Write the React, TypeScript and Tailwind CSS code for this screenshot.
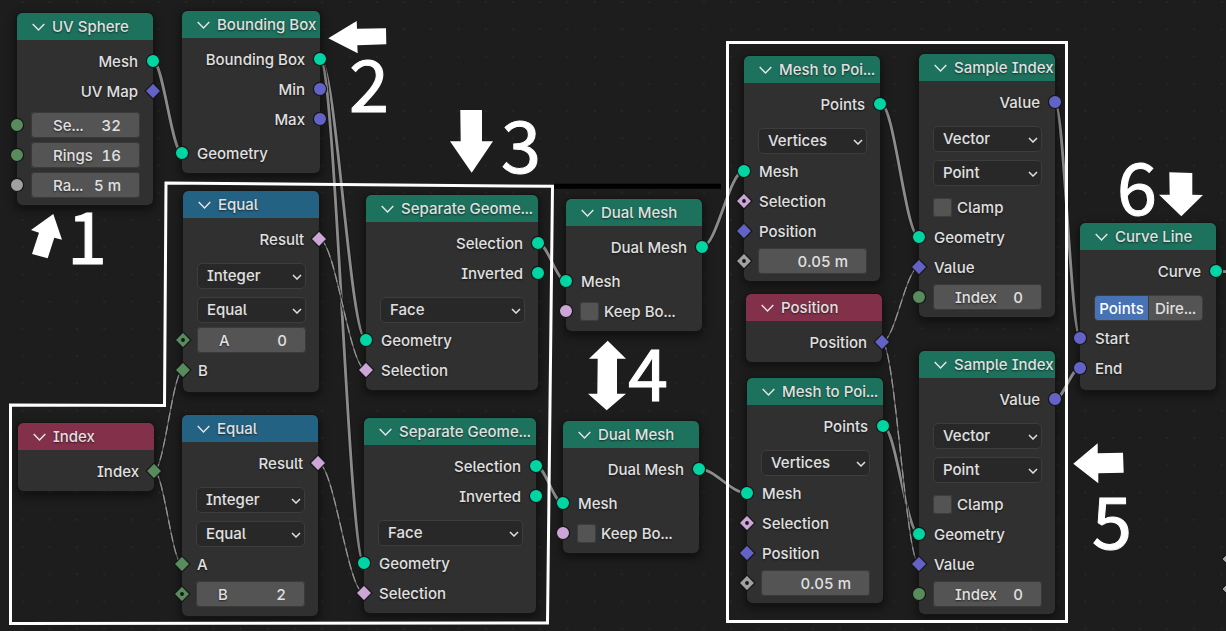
import React, { useId } from "react";
import clsx from "clsx";

type Shape = "circle" | "diamond" | "dotted";
type Tint = "geometry" | "vector" | "boolean" | "integer" | "float";
type SocketSpec = { shape?: Shape; tint: Tint };

const fills: Record<Tint, string> = {
  geometry: "fill-[#00d6a3]",
  vector: "fill-[#6363c7]",
  boolean: "fill-[#cca6d6]",
  integer: "fill-[#598c5c]",
  float: "fill-[#a1a1a1]",
};

function Socket({ shape = "circle", tint, side }: SocketSpec & { side: "left" | "right" }) {
  return (
    <svg
      viewBox="0 0 18 18"
      aria-hidden="true"
      className={clsx("absolute top-1.5 size-[18px]", side === "left" ? "-left-[9px]" : "-right-[9px]", fills[tint])}
    >
      {shape === "circle" ? (
        <circle cx="9" cy="9" r="6.6" stroke="#161616" strokeWidth="1.2" />
      ) : (
        <path d="M9 1.1 16.9 9 9 16.9 1.1 9Z" stroke="#161616" strokeWidth="1.2" />
      )}
      {shape === "dotted" && <circle cx="9" cy="9" r="1.9" fill="#161616" />}
    </svg>
  );
}

function Output({ label, ...socket }: SocketSpec & { label: string }) {
  return (
    <div className="relative flex h-[30px] items-center justify-end px-[15px]">
      {label}
      <Socket {...socket} side="right" />
    </div>
  );
}

function Input({ label, ...socket }: SocketSpec & { label: string }) {
  return (
    <div className="relative flex h-[30px] items-center px-[15px]">
      <Socket {...socket} side="left" />
      {label}
    </div>
  );
}

function NumberField({ label, name, value, ...socket }: SocketSpec & { label?: string; name: string; value: string }) {
  return (
    <div className="relative flex h-[30px] items-center pr-[13px] pl-[14px]">
      <Socket {...socket} side="left" />
      <label className="flex h-[26px] min-w-0 flex-1 items-center rounded bg-[#545454] pr-[19px] pl-[22px] ring-1 ring-[#3a3a3a] ring-inset">
        {label && <span>{label}</span>}
        <input
          type="text"
          aria-label={name}
          defaultValue={value}
          className="w-0 min-w-0 flex-1 bg-transparent text-right outline-none"
        />
      </label>
    </div>
  );
}

function Check({ label, socket }: { label: string; socket?: SocketSpec }) {
  const id = useId();
  return (
    <div className="relative flex h-[30px] items-center gap-[5px] px-[14px]">
      {socket && <Socket {...socket} side="left" />}
      <input id={id} type="checkbox" className="size-[19px] appearance-none rounded-[3px] bg-[#545454] ring-1 ring-[#3d3d3d] ring-inset" />
      <label htmlFor={id}>{label}</label>
    </div>
  );
}

function Options({ children }: { children: React.ReactNode }) {
  return <div className="mt-[9px] mb-0.5 flex flex-col gap-2 pr-[13px] pl-[14px]">{children}</div>;
}

function Dropdown({ name, value }: { name: string; value: string }) {
  return (
    <div className="grid h-[26px] items-center">
      <select
        aria-label={name}
        defaultValue={value}
        className="col-start-1 row-start-1 h-[26px] w-full appearance-none rounded-[5px] border border-[#3d3d3d] bg-[#282828] pl-[9px] leading-[22px] text-[#e0e0e0] outline-none"
      >
        <option>{value}</option>
      </select>
      <svg viewBox="0 0 10 6" aria-hidden="true" className="pointer-events-none col-start-1 row-start-1 mt-0.5 mr-1 h-1.5 w-2.5 justify-self-end">
        <path d="M1 1 5 5 9 1" fill="none" stroke="#e0e0e0" strokeWidth="1.5" />
      </svg>
    </div>
  );
}

function Node({
  title,
  place,
  head = "bg-[#1d725e]",
  foot = "pb-[5px]",
  children,
}: {
  title: string;
  place: string;
  head?: string;
  foot?: string;
  children: React.ReactNode;
}) {
  return (
    <section
      className={clsx(
        "absolute rounded-[5px] bg-[#303030] shadow-[0_3px_8px_2px_rgba(0,0,0,0.45)] outline outline-[#151515]",
        place,
        foot,
      )}
    >
      <header className={clsx("mb-1.5 flex h-[27px] items-center gap-[7px] rounded-t-[5px] pl-[15px] whitespace-nowrap", head)}>
        <svg viewBox="0 0 13 8" aria-hidden="true" className="h-2 w-[13px] shrink-0">
          <path d="M0.7 1 6.5 7 12.3 1" fill="none" stroke="#e6e6e6" strokeWidth="1.4" />
        </svg>
        <h2>{title}</h2>
      </header>
      {children}
    </section>
  );
}

function Inputs({ children }: { children: React.ReactNode }) {
  return <div className="mt-1">{children}</div>;
}

function SeparateGeometry({ place }: { place: string }) {
  return (
    <Node title="Separate Geome..." place={place}>
      <Output label="Selection" tint="geometry" />
      <Output label="Inverted" tint="geometry" />
      <Options>
        <Dropdown name="Domain" value="Face" />
      </Options>
      <Input label="Geometry" tint="geometry" />
      <Input label="Selection" tint="boolean" shape="diamond" />
    </Node>
  );
}

function DualMesh({ place }: { place: string }) {
  return (
    <Node title="Dual Mesh" place={place}>
      <Output label="Dual Mesh" tint="geometry" />
      <Inputs>
        <Input label="Mesh" tint="geometry" />
        <Check label="Keep Bo..." socket={{ tint: "boolean" }} />
      </Inputs>
    </Node>
  );
}

function MeshToPoints({ place }: { place: string }) {
  return (
    <Node title="Mesh to Poi..." place={place}>
      <Output label="Points" tint="geometry" />
      <Options>
        <Dropdown name="Mode" value="Vertices" />
      </Options>
      <Input label="Mesh" tint="geometry" />
      <Input label="Selection" tint="boolean" shape="dotted" />
      <Input label="Position" tint="vector" shape="diamond" />
      <NumberField name="Radius" value="0.05 m" tint="float" shape="dotted" />
    </Node>
  );
}

function SampleIndex({ place }: { place: string }) {
  return (
    <Node title="Sample Index" place={place}>
      <Output label="Value" tint="vector" />
      <Options>
        <Dropdown name="Data type" value="Vector" />
        <Dropdown name="Domain" value="Point" />
      </Options>
      <div className="mt-1.5">
        <Check label="Clamp" />
        <Input label="Geometry" tint="geometry" />
        <Input label="Value" tint="vector" shape="diamond" />
        <NumberField label="Index" name="Index" value="0" tint="integer" />
      </div>
    </Node>
  );
}

type Link = [number, number, number, number];

const solidLinks: Link[] = [
  [153, 61, 182, 153],
  [320, 59, 366, 340],
  [320, 59, 364, 563],
  [538, 243, 566, 281],
  [536, 466, 563, 503],
  [702, 247, 744, 171],
  [699, 469, 747, 493],
  [881, 104, 919, 237],
  [883, 426, 919, 534],
  [1055, 102, 1080, 338],
  [1055, 399, 1080, 368],
  [1216, 271, 1260, 276],
];

const fieldLinks: Link[] = [
  [154, 471, 183, 370],
  [154, 471, 182, 564],
  [319, 239, 366, 370],
  [318, 463, 364, 593],
  [882, 342, 919, 267],
  [882, 342, 919, 564],
];

const curve = ([x1, y1, x2, y2]: Link) => {
  const d = (x2 - x1) * 0.35;
  return `M${x1} ${y1}C${x1 + d} ${y1} ${x2 - d} ${y2} ${x2} ${y2}`;
};

function Links() {
  return (
    <svg aria-hidden="true" className="absolute inset-0 size-full" fill="none">
      <defs>
        <pattern id="grid" x="9" y="-11.6" width="27.25" height="27.25" patternUnits="userSpaceOnUse">
          <circle cx="13.6" cy="13.6" r="1" fill="#282828" />
        </pattern>
      </defs>
      <rect width="100%" height="100%" fill="url(#grid)" />
      <g fill="#a1a1a1" stroke="#161616">
        <path d="M1222 559l7.500-7.500 7.500 7.500-7.500 7.500Z" />
        <path d="M1222 589l7.500-7.500 7.500 7.500-7.500 7.500Z" />
      </g>
      {solidLinks.map((l) => (
        <g key={l.join()}>
          <path d={curve(l)} stroke="#161616" strokeWidth="4.4" />
          <path d={curve(l)} stroke="#8c8c8c" strokeWidth="2.8" />
        </g>
      ))}
      {fieldLinks.map((l) => (
        <g key={l.join()}>
          <path d={curve(l)} stroke="#161616" strokeWidth="2.8" />
          <path d={curve(l)} stroke="#666666" strokeWidth="1.3" />
          <path d={curve(l)} stroke="#959595" strokeWidth="1.3" strokeDasharray="9 4" />
        </g>
      ))}
    </svg>
  );
}

function Marks() {
  return (
    <svg aria-hidden="true" className="pointer-events-none absolute inset-0 size-full">
      <path d="M554 186.300H721" stroke="#000000" strokeWidth="5" />
      <g fill="none" stroke="#ffffff" strokeWidth="3">
        <path d="M166 183 552.500 186.300 547.500 623 10.500 623.500V405L164.500 405.500Z" />
        <path d="M727.500 42.500H1066.500V621.500H727.500Z" />
      </g>
      <g fill="#ffffff">
        <path d="M53.300 214 62 239.700 54.300 237.700 47.700 258.300 32 254 39 232.700 31 230Z" />
        <path d="M328.300 38.300 356.700 21 357 28.700 386 28.300 386.300 44.300 357.300 45.300 357.700 53.300Z" />
        <path d="M460.300 110H482V141.300H493L471.700 172.700 450 141.300H460.700Z" />
        <path d="M607.700 340.700 626 358.700H617V393.700H626L606.700 410.300 588 393.700H597.300L597.700 358.700H589Z" />
        <path d="M1169.300 172.300 1192.300 173V194.700L1203 195 1181.300 216.300 1159 194.700H1169.700Z" />
        <path d="M1073.300 463.700 1097.700 443.300V453.300L1123 452.700 1123.700 472.700 1098.300 473.300V483.300Z" />
      </g>
    </svg>
  );
}

const steps = [
  { n: 1, place: "left-[67px] top-[197px]" },
  { n: 2, place: "left-[349px] top-[45px]" },
  { n: 3, place: "left-[501px] top-[106px]" },
  { n: 4, place: "left-[628px] top-[334px]" },
  { n: 5, place: "left-[1092px] top-[482px]" },
  { n: 6, place: "left-[1117px] top-[148px]" },
];

export default function App() {
  return (
    <main className="relative min-h-screen w-full overflow-hidden bg-[#1d1d1d] font-['Inter',sans-serif] text-[15px] leading-none font-medium text-[#e0e0e0] [font-feature-settings:'cv05','cv08','tnum'] [text-shadow:0_1px_2px_rgba(0,0,0,0.6)]">
      <Links />

      <Node title="UV Sphere" place="left-[17px] top-[13px] w-[136px]">
        <Output label="Mesh" tint="geometry" />
        <Output label="UV Map" tint="vector" shape="diamond" />
        <Inputs>
          <NumberField label="Se..." name="Segments" value="32" tint="integer" />
          <NumberField label="Rings" name="Rings" value="16" tint="integer" />
          <NumberField label="Ra..." name="Radius" value="5 m" tint="float" />
        </Inputs>
      </Node>

      <Node title="Bounding Box" place="left-[182px] top-[11px] w-[138px]">
        <Output label="Bounding Box" tint="geometry" />
        <Output label="Min" tint="vector" />
        <Output label="Max" tint="vector" />
        <Inputs>
          <Input label="Geometry" tint="geometry" />
        </Inputs>
      </Node>

      <Node title="Equal" head="bg-[#246283]" foot="pb-[7px]" place="left-[183px] top-[191px] w-[136px]">
        <Output label="Result" tint="boolean" shape="diamond" />
        <Options>
          <Dropdown name="Data type" value="Integer" />
          <Dropdown name="Operation" value="Equal" />
        </Options>
        <NumberField label="A" name="A" value="0" tint="integer" shape="dotted" />
        <Input label="B" tint="integer" shape="diamond" />
      </Node>

      <SeparateGeometry place="left-[366px] top-[195px] w-[172px]" />
      <DualMesh place="left-[566px] top-[199px] w-[136px]" />

      <Node title="Index" head="bg-[#83314a]" place="left-[18px] top-[423px] w-[136px]">
        <Output label="Index" tint="integer" shape="diamond" />
      </Node>

      <Node title="Equal" head="bg-[#246283]" foot="pb-[7px]" place="left-[182px] top-[415px] w-[136px]">
        <Output label="Result" tint="boolean" shape="diamond" />
        <Options>
          <Dropdown name="Data type" value="Integer" />
          <Dropdown name="Operation" value="Equal" />
        </Options>
        <Input label="A" tint="integer" shape="diamond" />
        <NumberField label="B" name="B" value="2" tint="integer" shape="dotted" />
      </Node>

      <SeparateGeometry place="left-[364px] top-[418px] w-[172px]" />
      <DualMesh place="left-[563px] top-[421px] w-[136px]" />

      <MeshToPoints place="left-[744px] top-[56px] w-[136px]" />
      <Node title="Position" head="bg-[#83314a]" place="left-[746px] top-[294px] w-[136px]">
        <Output label="Position" tint="vector" shape="diamond" />
      </Node>
      <MeshToPoints place="left-[747px] top-[378px] w-[136px]" />

      <SampleIndex place="left-[919px] top-[54px] w-[136px]" />
      <SampleIndex place="left-[919px] top-[351px] w-[136px]" />

      <Node title="Curve Line" foot="pb-[7px]" place="left-[1080px] top-[223px] w-[136px]">
        <Output label="Curve" tint="geometry" />
        <Options>
          <div role="group" aria-label="Mode" className="flex h-[26px] gap-px overflow-hidden rounded border border-[#3d3d3d] bg-[#3d3d3d]">
            <button type="button" aria-pressed="true" className="flex-1 bg-[#4772b3] text-white">
              Points
            </button>
            <button type="button" aria-pressed="false" className="flex-1 bg-[#545454]">
              Dire...
            </button>
          </div>
        </Options>
        <Input label="Start" tint="vector" />
        <Input label="End" tint="vector" />
      </Node>

      <Marks />
      {steps.map(({ n, place }) => (
        <span key={n} className={clsx("absolute font-['Noto_Sans_CJK_SC',sans-serif] text-[72px] leading-none font-normal text-white [-webkit-text-stroke:1px_white] [font-feature-settings:normal] [text-shadow:none]", place)}>
          {n}
        </span>
      ))}
    </main>
  );
}
